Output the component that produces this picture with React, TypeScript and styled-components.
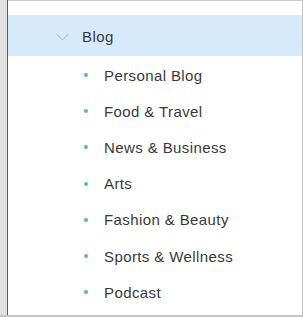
import React from "react";
import styled, { createGlobalStyle } from "styled-components";

const Global = createGlobalStyle`
  html, body { margin: 0; padding: 0; background: #fff; }
  body { font-family: "Liberation Sans", Arial, sans-serif; }
`;

const Frame = styled.div`
  display: flex;
  width: 303px;
  height: 317px;
  box-sizing: border-box;
  border-bottom: 2px solid #c4c4c4;
`;

const Rail = styled.div`
  width: 7px;
  flex: none;
  background: repeating-linear-gradient(
    90deg,
    #e8e8e8 0px,
    #e8e8e8 1px,
    #dcdcdc 1px,
    #dcdcdc 2px
  );
  border-right: 1px solid #5a5a5a;
`;

const Panel = styled.div`
  flex: 1;
  display: flex;
  flex-direction: column;
  border-top: 1px solid #c8c8c8;
  border-right: 1px solid #c4c4c4;
  padding-top: 14px;
`;

const GroupRow = styled.div`
  height: 41px;
  background: #d6eafc;
  display: flex;
  align-items: center;
  padding-left: 48px;
  gap: 13px;
  color: #3a3a3a;
  font-size: 15px;
  letter-spacing: 0.4px;
  padding-top: 1px;
  box-sizing: border-box;
`;

const Chevron = styled.svg`
  width: 13px;
  height: 8px;
  flex: none;
  margin-top: 2px;
`;

const List = styled.ul`
  list-style: none;
  margin: 0;
  padding: 1px 0 0;
`;

const Item = styled.li`
  height: 36.2px;
  display: flex;
  align-items: center;
  padding-left: 76px;
  gap: 16px;
  color: #3a3a3a;
  font-size: 15px;
  letter-spacing: 0.4px;
`;

const Dot = styled.span`
  width: 4px;
  height: 4px;
  border-radius: 50%;
  background: #5aaee8;
  flex: none;
`;

const items = [
  "Personal Blog",
  "Food & Travel",
  "News & Business",
  "Arts",
  "Fashion & Beauty",
  "Sports & Wellness",
  "Podcast",
];

export default function App() {
  return (
    <>
      <Global />
      <Frame>
        <Rail />
        <Panel>
          <GroupRow>
            <Chevron viewBox="0 0 13 8">
              <path d="M0.5 1 L6.5 7 L12.5 1" fill="none" stroke="#8cb8e4" strokeWidth="1" />
            </Chevron>
            <span>Blog</span>
          </GroupRow>
          <List>
            {items.map((t) => (
              <Item key={t}>
                <Dot />
                <span>{t}</span>
              </Item>
            ))}
          </List>
        </Panel>
      </Frame>
    </>
  );
}
